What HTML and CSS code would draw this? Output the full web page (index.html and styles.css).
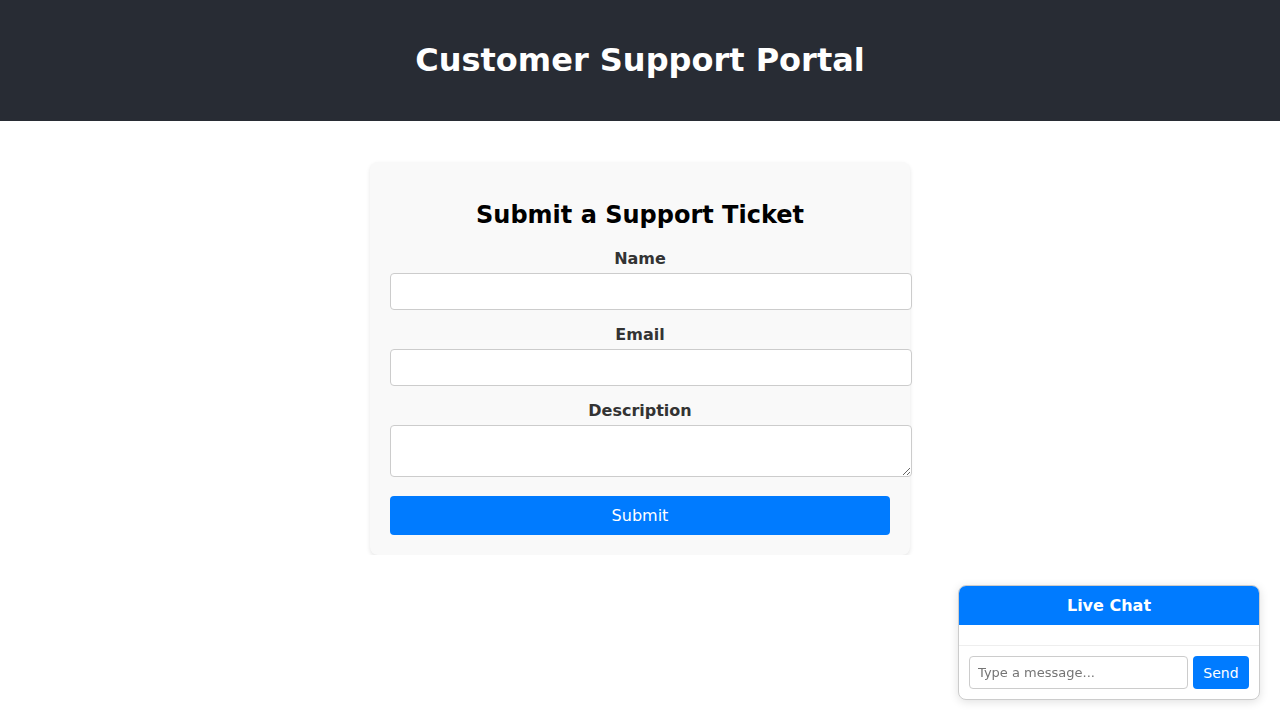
FILE: index.html
```html
<!DOCTYPE html>
<html lang="en">
<head>
<meta charset="utf-8">
<title>Customer Support Portal</title>
<link rel="stylesheet" href="styles.css">
</head>
<body>
<header class="site-header">
  <h1 class="site-title">Customer Support Portal</h1>
</header>
<main class="main">
  <form class="ticket-card">
    <h2 class="ticket-title">Submit a Support Ticket</h2>
    <label class="field-label" for="name">Name</label>
    <input class="field-input" id="name" type="text">
    <label class="field-label" for="email">Email</label>
    <input class="field-input" id="email" type="email">
    <label class="field-label" for="desc">Description</label>
    <textarea class="field-input field-textarea" id="desc"></textarea>
    <button class="submit-btn" type="button">Submit</button>
  </form>
</main>
<aside class="chat">
  <div class="chat-header">Live Chat</div>
  <div class="chat-messages"></div>
  <div class="chat-input-row">
    <input class="chat-input" type="text" placeholder="Type a message...">
    <button class="chat-send" type="button">Send</button>
  </div>
</aside>
</body>
</html>
```

FILE: styles.css
```css
html, body {
  margin: 0;
  padding: 0;
  background: #ffffff;
  font-family: "DejaVu Sans", sans-serif;
}

.site-header {
  background: #282c34;
  color: #ffffff;
  padding: 42px 0;
  text-align: center;
}

.site-title {
  margin: 0;
  font-size: 32px;
  line-height: 37px;
  font-weight: bold;
}

.main {
  padding-top: 41px;
}

.ticket-card {
  display: block;
  box-sizing: content-box;
  width: 500px;
  margin: 0 auto;
  padding: 20px;
  background: #f9f9f9;
  border-radius: 8px;
  box-shadow: 0 2px 4px rgba(0, 0, 0, 0.1);
}

.ticket-title {
  text-align: center;
  font-size: 24px;
  line-height: 28px;
  margin: 19px 0 20px;
  color: #000;
}

.field-label {
  display: block;
  text-align: center;
  font-weight: bold;
  font-size: 16px;
  line-height: 19px;
  color: #333333;
  margin-bottom: 5px;
}

.field-input {
  display: block;
  box-sizing: content-box;
  width: 100%;
  padding: 8px 10px;
  font-family: "DejaVu Sans", sans-serif;
  font-size: 16px;
  line-height: 19px;
  height: 19px;
  border: 1px solid #cccccc;
  border-radius: 4px;
  background: #ffffff;
  margin: 0 0 15px;
}

.field-textarea {
  height: 34px;
  resize: vertical;
  margin-bottom: 19px;
}

.submit-btn {
  display: block;
  width: 100%;
  height: 39px;
  background: #007bff;
  color: #ffffff;
  border: none;
  border-radius: 4px;
  font-family: "DejaVu Sans", sans-serif;
  font-size: 16px;
  cursor: pointer;
}

.chat {
  position: fixed;
  right: 20px;
  bottom: 20px;
  width: 300px;
  border: 1px solid #cccccc;
  border-radius: 8px;
  background: #ffffff;
  box-shadow: 0 2px 10px rgba(0, 0, 0, 0.12);
  overflow: hidden;
}

.chat-header {
  background: #007bff;
  color: #ffffff;
  text-align: center;
  font-weight: bold;
  font-size: 16px;
  line-height: 19px;
  padding: 10px;
}

.chat-messages {
  height: 20px;
}

.chat-input-row {
  display: flex;
  gap: 5px;
  padding: 10px;
  border-top: 1px solid #eeeeee;
}

.chat-input {
  flex: 1;
  min-width: 0;
  box-sizing: border-box;
  height: 33px;
  padding: 6px 8px;
  border: 1px solid #cccccc;
  border-radius: 4px;
  font-family: "DejaVu Sans", sans-serif;
  font-size: 13px;
}

.chat-input::placeholder {
  color: #757575;
}

.chat-send {
  box-sizing: border-box;
  width: 56px;
  height: 33px;
  background: #007bff;
  color: #ffffff;
  border: none;
  border-radius: 4px;
  font-family: "DejaVu Sans", sans-serif;
  font-size: 14px;
  padding: 0;
}
```
